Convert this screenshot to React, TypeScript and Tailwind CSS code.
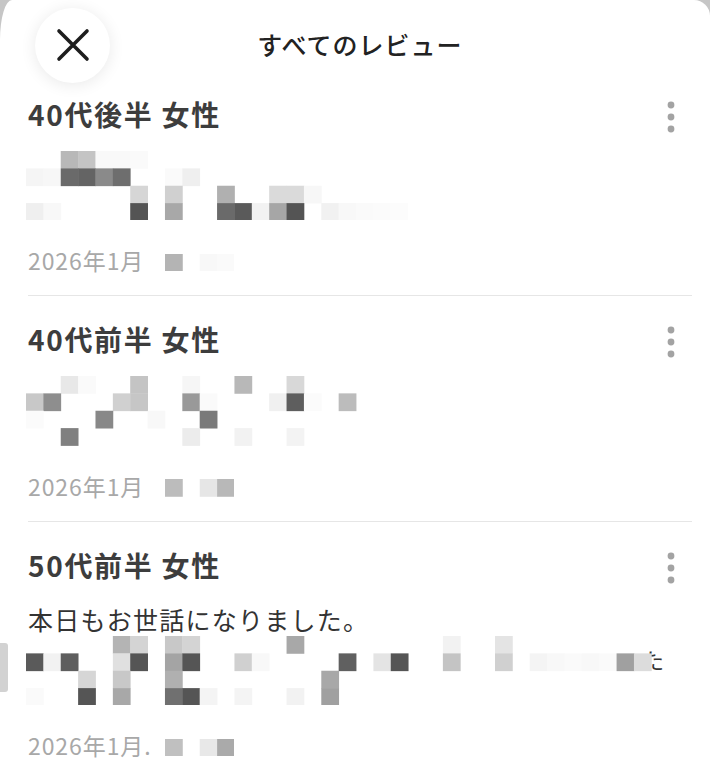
import React from "react";

type Cell = [number, number, string];

const C = 17.37;

type Review = {
  title: string;
  body?: string;
  date: string;
  cells: Cell[];
  dateCells: Cell[];
  tail?: boolean;
};

const reviews: Review[] = [
  {
    title: "40代後半 女性",
    date: "2026年1月",
    cells: [
      [2, 0, "#b8b8b8"], [3, 0, "#c4c4c4"], [4, 0, "#f9f9f9"], [5, 0, "#f9f9f9"], [6, 0, "#fafafa"],
      [0, 1, "#f5f5f5"], [1, 1, "#f7f7f7"], [2, 1, "#6a6a6a"], [3, 1, "#646464"], [4, 1, "#8a8a8a"],
      [5, 1, "#6e6e6e"], [8, 1, "#fafafa"], [9, 1, "#efefef"],
      [6, 2, "#d6d6d6"], [8, 2, "#d0d0d0"], [11, 2, "#b0b0b0"], [14, 2, "#dadada"], [15, 2, "#dadada"],
      [16, 2, "#f7f7f7"],
      [0, 3, "#efefef"], [1, 3, "#f8f8f8"], [6, 3, "#545454"], [8, 3, "#a8a8a8"], [11, 3, "#6a6a6a"],
      [12, 3, "#5a5a5a"], [13, 3, "#f2f2f2"], [14, 3, "#a6a6a6"], [15, 3, "#545454"], [17, 3, "#f1f1f1"],
      [18, 3, "#f8f8f8"], [19, 3, "#fafafa"], [20, 3, "#fbfbfb"], [21, 3, "#fcfcfc"],
    ],
    dateCells: [[0, 0, "#b4b4b4"], [2, 0, "#f8f8f8"], [3, 0, "#fafafa"]],
  },
  {
    title: "40代前半 女性",
    date: "2026年1月",
    cells: [
      [2, 0, "#e8e8e8"], [3, 0, "#fafafa"], [6, 0, "#c4c4c4"], [9, 0, "#f6f6f6"], [12, 0, "#b8b8b8"],
      [15, 0, "#d8d8d8"],
      [0, 1, "#c8c8c8"], [1, 1, "#8e8e8e"], [5, 1, "#d0d0d0"], [6, 1, "#c6c6c6"], [9, 1, "#999999"],
      [10, 1, "#fafafa"], [14, 1, "#f0f0f0"], [15, 1, "#5e5e5e"], [16, 1, "#fbfbfb"], [18, 1, "#bcbcbc"],
      [0, 2, "#fbfbfb"], [4, 2, "#888888"], [7, 2, "#f8f8f8"], [10, 2, "#7a7a7a"],
      [2, 3, "#808080"], [9, 3, "#ececec"], [12, 3, "#f2f2f2"], [15, 3, "#f3f3f3"],
    ],
    dateCells: [[0, 0, "#bcbcbc"], [2, 0, "#e6e6e6"], [3, 0, "#b8b8b8"]],
  },
  {
    title: "50代前半 女性",
    body: "本日もお世話になりました。",
    date: "2026年1月.",
    tail: true,
    cells: [
      [5, 0, "#b4b4b4"], [6, 0, "#d4d4d4"], [8, 0, "#c8c8c8"], [9, 0, "#d4d4d4"], [15, 0, "#a8a8a8"],
      [24, 0, "#f2f2f2"], [27, 0, "#e4e4e4"],
      [0, 1, "#5a5a5a"], [1, 1, "#f2f2f2"], [2, 1, "#5e5e5e"], [5, 1, "#e0e0e0"], [6, 1, "#555555"],
      [8, 1, "#a4a4a4"], [9, 1, "#555555"], [12, 1, "#d0d0d0"], [13, 1, "#f8f8f8"], [18, 1, "#606060"],
      [20, 1, "#e4e4e4"], [21, 1, "#555555"], [24, 1, "#c4c4c4"], [27, 1, "#d0d0d0"], [29, 1, "#f4f4f4"],
      [30, 1, "#f8f8f8"], [31, 1, "#fafafa"], [32, 1, "#f8f8f8"], [33, 1, "#fafafa"], [34, 1, "#a0a0a0"],
      [35, 1, "#dcdcdc"],
      [3, 2, "#d6d6d6"], [5, 2, "#c8c8c8"], [8, 2, "#b0b0b0"], [17, 2, "#a8a8a8"],
      [0, 3, "#fafafa"], [3, 3, "#555555"], [5, 3, "#a8a8a8"], [8, 3, "#707070"], [9, 3, "#555555"],
      [10, 3, "#f4f4f4"], [12, 3, "#f4f4f4"], [15, 3, "#f2f2f2"], [17, 3, "#a0a0a0"],
    ],
    dateCells: [[0, 0, "#c0c0c0"], [2, 0, "#e8e8e8"], [3, 0, "#aaaaaa"]],
  },
];

function Mosaic({ cells, cols, rows, tail }: { cells: Cell[]; cols: number; rows: number; tail?: boolean }) {
  return (
    <svg width={cols * C} height={rows * C} className="block shrink-0">
      {tail && (
        <text x={35 * C + 8} y={2 * C - 2} fontSize="22" fill="#333" fontFamily="Noto Sans CJK JP, sans-serif">
          た
        </text>
      )}
      {cells.map(([k, r, fill]) => (
        <rect key={`${k}-${r}`} x={k * C} y={r * C} width={C + 0.4} height={C + 0.4} fill={fill} />
      ))}
    </svg>
  );
}

function Dots() {
  return (
    <svg width="14" height="32" viewBox="0 0 14 32" className="mr-[14px] mt-[4px] shrink-0">
      <circle cx="7" cy="4" r="3.4" fill="#a3a3a3" />
      <circle cx="7" cy="16" r="3.4" fill="#a3a3a3" />
      <circle cx="7" cy="28" r="3.4" fill="#a3a3a3" />
    </svg>
  );
}

function ReviewItem({ review, first, last }: { review: Review; first: boolean; last: boolean }) {
  return (
    <div
      className={`ml-[28px] mr-[18px] pb-[20px] ${last ? "" : "border-b border-[#e6e6e6]"} ${
        first ? "pt-[7px]" : "pt-[26px]"
      }`}
    >
      <div className="flex h-[34px] items-start justify-between">
        <h2 className="h-[34px] text-[28px] leading-[34px] font-bold text-[#3d3d3d] tracking-[0.06em]">
          {review.title}
        </h2>
        <Dots />
      </div>
      {review.body && (
        <p className="mt-[20px] h-[34px] text-[25px] leading-[34px] text-[#333] tracking-[0.05em]">{review.body}</p>
      )}
      <div className={`${review.body ? "mt-0" : "mt-[20px]"} -ml-[2px]`}>
        <Mosaic cells={review.cells} cols={review.tail ? 38 : 22} rows={4} tail={review.tail} />
      </div>
      <div className="mt-[25px] flex h-[30px] items-center">
        <span className="w-[137px] shrink-0 text-[23px] leading-[30px] text-[#a8a8a8] tracking-[0.04em]">
          {review.date}
        </span>
        <div className="mt-[4px]">
          <Mosaic cells={review.dateCells} cols={4} rows={1} />
        </div>
      </div>
    </div>
  );
}

export default function App() {
  return (
    <div className="min-h-screen bg-[#c6c6c6] font-['Noto_Sans_CJK_JP','Noto_Sans',sans-serif]">
      <div className="relative h-[781px] overflow-hidden rounded-tl-[12px_40px] rounded-tr-[16px] bg-white">
        <div className="grid h-[90px] grid-cols-[125px_1fr_115px] items-center">
          <button className="ml-[35px] flex h-[75px] w-[75px] items-center justify-center rounded-full bg-white shadow-[0_2px_16px_rgba(0,0,0,0.09)]">
            <svg width="34" height="34" viewBox="0 0 34 34">
              <path d="M3 3 L31 31 M31 3 L3 31" stroke="#1e1e1e" strokeWidth="3.6" strokeLinecap="round" fill="none" />
            </svg>
          </button>
          <h1 className="text-center text-[25px] font-medium text-[#222] tracking-[0.04em]">すべてのレビュー</h1>
          <div />
        </div>
        {reviews.map((review, i) => (
          <ReviewItem key={review.title} review={review} first={i === 0} last={i === reviews.length - 1} />
        ))}
        <div className="absolute left-0 top-[643px] h-[49px] w-[8px] rounded-r-[3px] bg-[#d2d2d2]" />
      </div>
    </div>
  );
}
